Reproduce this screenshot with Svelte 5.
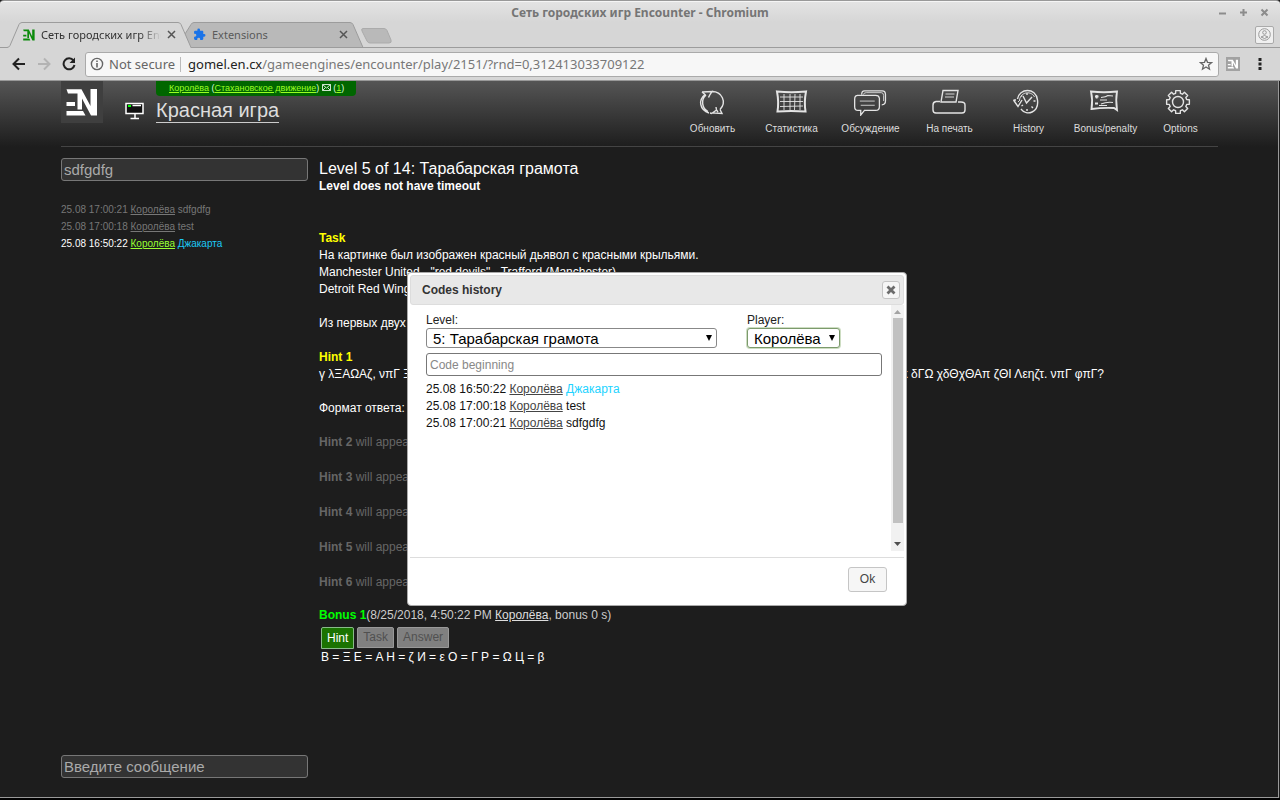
<script>
  const tools = [
    { id: 'refresh', label: 'Обновить' },
    { id: 'stats', label: 'Статистика' },
    { id: 'chat', label: 'Обсуждение' },
    { id: 'print', label: 'На печать' },
    { id: 'history', label: 'History' },
    { id: 'bonus', label: 'Bonus/penalty' },
    { id: 'options', label: 'Options' },
  ];
  const recent = [
    { time: '25.08 17:00:21', player: 'Королёва', code: 'sdfgdfg', ok: false },
    { time: '25.08 17:00:18', player: 'Королёва', code: 'test', ok: false },
    { time: '25.08 16:50:22', player: 'Королёва', code: 'Джакарта', ok: true },
  ];
  const codes = [...recent].reverse();
  const hints = [2, 3, 4, 5, 6];

  // Gear outline with eight teeth around the centre of a 28x28 box.
  let gear = '';
  for (let i = 0; i < 8; i++) {
    const a = (i * Math.PI) / 4;
    [[-0.27, 9], [-0.2, 11.6], [0.2, 11.6], [0.27, 9]].forEach(([d, r], j) => {
      const x = (14 + r * Math.sin(a + d)).toFixed(2);
      const y = (14 - r * Math.cos(a + d)).toFixed(2);
      gear += `${i === 0 && j === 0 ? 'M' : 'L'}${x} ${y}`;
    });
  }
  gear += 'Z';
</script>

{#snippet logo()}
  <path d="M5.5 8.3H20.5L29.5 25V8H36V34.5H30L21 17.5V28.5H16.5V12.5H7ZM5.5 21H14V25H5.5ZM5.5 30H22L24.5 34.5H5.5Z" />
{/snippet}

<div class="window">
  <div class="titlebar">
    <span class="title">Сеть городских игр Encounter - Chromium</span>
    <div class="controls">
      <button aria-label="Minimize"><svg width="9" height="9" viewBox="0 0 9 9"><path d="M1 5.5H8" /></svg></button>
      <button aria-label="Maximize"><svg width="9" height="9" viewBox="0 0 9 9"><path d="M1 4.5H8M4.5 1V8" /></svg></button>
      <button aria-label="Close window"><svg width="9" height="9" viewBox="0 0 9 9"><path d="M1.5 1.5L7.5 7.5M7.5 1.5L1.5 7.5" /></svg></button>
    </div>
  </div>

  <div class="tabs">
    <svg class="tabshapes" width="400" height="26" viewBox="0 0 400 26" aria-hidden="true">
      <path d="M185 12L191 2.5Q192 .5 194 .5H350Q352 .5 353 2.5L363 25.5H190Z" fill="#b9b9b9" stroke="#9c9c9c" />
      <path d="M0 25.5H7Q9 25.5 10 23.5L19 2.5Q20 .5 22 .5H178Q180 .5 181 2.5L191 25.5V27H0Z" fill="#d6d6d6" stroke="#9c9c9c" />
      <path d="M363 6.5H384Q386 6.5 387 8.5L391 18Q392 21 389 21H370Q368 21 367 19L362 9Q361 6.5 363 6.5Z" fill="#b9b9b9" stroke="#ababab" />
    </svg>
    <div class="tab first">
      <svg width="12" height="12" viewBox="5 7 32 29" fill="#0a8a0a" preserveAspectRatio="none">{@render logo()}</svg>
      <span class="tabname fade">Сеть городских игр Enc</span>
      <button aria-label="Close tab"><svg width="9" height="9" viewBox="0 0 9 9"><path d="M1 1L8 8M8 1L1 8" /></svg></button>
    </div>
    <div class="tab second">
      <svg width="13" height="13" viewBox="0 0 24 24" fill="#1a73e8"><path d="M20.5 11H19V7c0-1.100-.9-2-2-2h-4V3.500a2.500 2.500 0 0 0-5 0V5H4a2 2 0 0 0-2 2v3.800h1.500a2.700 2.700 0 0 1 0 5.400H2V20a2 2 0 0 0 2 2h3.800v-1.500a2.700 2.700 0 0 1 5.400 0V22H17a2 2 0 0 0 2-2v-4h1.500a2.500 2.500 0 0 0 0-5z" /></svg>
      <span class="tabname">Extensions</span>
      <button aria-label="Close tab"><svg width="9" height="9" viewBox="0 0 9 9"><path d="M1 1L8 8M8 1L1 8" /></svg></button>
    </div>
    <button class="profile" aria-label="Profile">
      <svg width="13" height="13" viewBox="0 0 13 13" fill="none" stroke="#999"><circle cx="6.5" cy="6.5" r="5.8" /><circle cx="6.5" cy="4.5" r="1.8" /><path d="M3 9Q6.5 6 10 9Q6.5 12 3 9Z" /></svg>
    </button>
  </div>

  <div class="toolbar">
    <button aria-label="Back"><svg width="14" height="14" viewBox="0 0 14 14" fill="none" stroke="#222" stroke-width="2"><path d="M13 7H2M7 1.5L1.5 7L7 12.5" /></svg></button>
    <button aria-label="Forward"><svg width="14" height="14" viewBox="0 0 14 14" fill="none" stroke="#b3b3b3" stroke-width="2"><path d="M1 7H12M7 1.5L12.5 7L7 12.5" /></svg></button>
    <button aria-label="Reload"><svg width="14" height="14" viewBox="0 0 14 14" fill="none" stroke="#222" stroke-width="2"><path d="M11.5 3.5A5.500 5.500 0 1 0 12.500 8" /><path d="M13 .5V6H7.500Z" fill="#222" stroke="none" /></svg></button>
    <div class="address">
      <svg width="14" height="14" viewBox="0 0 14 14" fill="none" stroke="#666"><circle cx="7" cy="7" r="5.6" stroke-width="1.4" /><path d="M7 6V10.500M7 3.500V5" stroke-width="1.6" /></svg>
      <span class="secure">Not secure</span>
      <span class="url"><b>gomel.en.cx</b>/gameengines/encounter/play/2151/?rnd=0,312413033709122</span>
      <svg width="14" height="14" viewBox="0 0 14 14" fill="none" stroke="#666" stroke-width="1.3"><path d="M7 1.500L8.500 5.300L12.600 5.600L9.500 8.200L10.500 12.200L7 10L3.500 12.200L4.500 8.200L1.400 5.600L5.500 5.300Z" /></svg>
    </div>
    <button class="ext" aria-label="Encounter"><svg width="14" height="14" viewBox="0 0 42 42"><rect width="42" height="42" fill="#a2a2a2" /><g fill="#fff">{@render logo()}</g></svg></button>
    <button aria-label="Menu"><svg width="4" height="12" viewBox="0 0 4 12" fill="#222"><path d="M.5 0H3.500V3H.5ZM.5 4.500H3.500V7.500H.5ZM.5 9H3.500V12H.5Z" /></svg></button>
  </div>

  <div class="page">
    <header>
      <a class="logo" href="#home" aria-label="Encounter"><svg width="42" height="42" viewBox="0 0 42 42" fill="#fff">{@render logo()}</svg></a>
      <svg class="monitor" width="20" height="18" viewBox="0 0 20 18" fill="none" stroke="#fff"><rect x="1" y="1.5" width="17" height="10" stroke-width="1.5" fill="#111" /><path d="M7.500 3.500H16M10 12V16M5.500 16.500H14" stroke-width="1.5" /><rect x="3" y="3" width="3" height="2" fill="#0f0" stroke="none" /></svg>
      <div class="game">
        <div class="user"><a href="#user">Королёва</a> (<a href="#team">Стахановское движение</a>) <svg width="9" height="7" viewBox="0 0 9 7" fill="none" stroke="#e4f4e4"><path d="M.5 .5H8.500V6.500H.5ZM.5 .5L4.500 4L8.500 .5M.5 6.500L3.500 3.500M8.500 6.500L5.500 3.500" stroke-width=".9" /></svg> (<a href="#mail">1</a>)</div>
        <a class="gamename" href="#game">Красная игра</a>
      </div>
      <nav>
        {#each tools as t}
          <a href="#{t.id}" class={t.id}>
            {#if t.id === 'refresh'}
              <svg width="30" height="28" viewBox="0 0 30 28"><path d="M4 4L14 3.500L12 6.500L10.500 9.500M4 4L7 6.500C0 12 1.500 22 11 25M8 7C2.500 12 4 20 10 23.500M12 25L14 25.500M14 3.500C24 3.500 29 14 22 21.500M22 21.500L24 25.500L14.500 25L18.500 22L18 19M20 24L18.500 22" /></svg>
            {:else if t.id === 'stats'}
              <svg width="34" height="28" viewBox="0 0 34 28"><path stroke-width="2" d="M2 3.500Q16 5 31 3.500Q29 14 30.500 23.500Q16 22.500 2.500 23.500Q4 14 2 3.500Z" /><path stroke-width=".9" d="M9 6V22M15 6V22M20 6L19.500 22M25 6V22M5 9H28M5 13.500H28M5 18.500L28 18" /></svg>
            {:else if t.id === 'chat'}
              <svg width="38" height="30" viewBox="0 0 38 30"><path d="M9 7Q9 3 12 3L31 3Q34.500 3 34.500 7V14Q34.500 18 30.500 18M4 8H24Q27.500 8 28 11V20Q28 24 24 24H12L8 29L8 24H5Q1.500 24 1.500 20V12Q1.500 8 5 8" /><path stroke-width=".9" d="M11 7Q11 5 14 5H30Q32.500 5 32.500 8V14M7 14H23M8 18.500H23" /></svg>
            {:else if t.id === 'print'}
              <svg width="38" height="28" viewBox="0 0 38 28"><path d="M10 14L12 2.500H27L25 14ZM9 13.500H5Q2 14 2 17V22Q2 25 5 25H31Q34 25 34 22V17Q34 14 30 14H27" /><path stroke-width=".9" d="M14.500 6H23.500M14 9H23" /></svg>
            {:else if t.id === 'history'}
              <svg width="34" height="28" viewBox="0 0 34 28"><path d="M5.500 11C7 0 24 -1 25.500 12C27 24 15 29 9 21M1.500 12L6 18.500L10 12M1.500 12H4" /><path stroke-width=".9" d="M7.500 12C9 3 20 3 22.500 9M9 9L10 7M6 14L8 12" /><path d="M11 8L14.500 15L20 9M15 5V7M21.500 13H23.500M15 21V23M9.500 18L11 17M19.500 18.500L21 20" /></svg>
            {:else if t.id === 'bonus'}
              <svg width="34" height="28" viewBox="0 0 34 28"><path stroke-width="1.8" d="M2 3.500Q15 5 28 3.500Q26.500 12 28 22L25 20Q13 19.500 2.500 21Q4 12 2 3.500Z" /><path d="M6 8.500H9.500M7.700 7V10.500M6 15.500H9" stroke-width="1.8" /><path stroke-width="1.1" d="M12 9.500Q17 9 19 7.500L24 8M11 12H18M12 16Q18 13.500 24 14.500M10 17.500H18" /></svg>
            {:else}
              <svg width="34" height="28" viewBox="0 0 34 28"><path d={gear} stroke-linejoin="round" /><circle cx="14" cy="14" r="5.5" /></svg>
            {/if}
            <span>{t.label}</span>
          </a>
        {/each}
      </nav>
    </header>

    <div class="columns">
      <aside>
        <input class="dark" type="text" aria-label="Code" value="sdfgdfg" />
        <ul class="recent">
          {#each recent as r}
            <li class:ok={r.ok}>{r.time} <a href="#player">{r.player}</a> <span>{r.code}</span></li>
          {/each}
        </ul>
        <input class="dark message" type="text" aria-label="Message" placeholder="Введите сообщение" />
      </aside>
      <main>
        <h1>Level 5 of 14: Тарабарская грамота</h1>
        <p class="timeout">Level does not have timeout</p>
        <h2>Task</h2>
        <p>На картинке был изображен красный дьявол с красными крыльями.<br />Manchester United - "red devils" - Trafford (Manchester)<br />Detroit Red Wings</p>
        <p>Из первых двух б</p>
        <h2>Hint 1</h2>
        <p class="cipher"><span>γ λΞΑΩΑζ, νπΓ Ξ</span><span>κκ δΓΩ χδΘχΘΑπ ζΘΙ Λεηζτ. νπΓ φπΓ?</span></p>
        <p>Формат ответа: с</p>
        {#each hints as n}
          <p class="pending"><b>Hint {n}</b> will appear</p>
        {/each}
        <div class="bonusline"><b>Bonus 1</b>(8/25/2018, 4:50:22 PM <a href="#player">Королёва</a>, bonus 0 s)</div>
        <div class="switch">
          <button class="on">Hint</button>
          <button>Task</button>
          <button>Answer</button>
        </div>
        <p class="key">В = Ξ Е = Α Н = ζ И = ε О = Γ Р = Ω Ц = β</p>
      </main>
    </div>
  </div>

  <div class="dialog" role="dialog" aria-labelledby="dialog-title">
    <div class="dhead">
      <span id="dialog-title">Codes history</span>
      <button aria-label="Close"><svg width="10" height="10" viewBox="0 0 10 10"><path d="M1.500 1.500L8.500 8.500M8.500 1.500L1.500 8.500" stroke="#6c6c6c" stroke-width="2.8" /></svg></button>
    </div>
    <div class="dbody">
      <div class="form">
        <div class="selects">
          <div class="field level">
            <label for="level">Level:</label>
            <select id="level"><option>5: Тарабарская грамота</option></select>
          </div>
          <div class="field">
            <label for="player">Player:</label>
            <select id="player" class="focus"><option>Королёва</option></select>
          </div>
        </div>
        <input class="filter" type="text" aria-label="Code beginning" placeholder="Code beginning" />
        <ul class="codes">
          {#each codes as c}
            <li class:ok={c.ok}>{c.time} <a href="#player">{c.player}</a> <span>{c.code}</span></li>
          {/each}
        </ul>
      </div>
      <div class="scroll" aria-hidden="true">
        <svg width="13" height="13" viewBox="0 0 13 13"><path d="M3 9L6.500 5L10 9Z" fill="#a3a3a3" /></svg>
        <div class="thumb"></div>
        <svg width="13" height="13" viewBox="0 0 13 13"><path d="M3 4L6.500 8L10 4Z" fill="#505050" /></svg>
      </div>
    </div>
    <div class="dfoot"><button>Ok</button></div>
  </div>
</div>

<style>
  :global(body) { margin: 0; background: #000; }
  * { box-sizing: border-box; }
  .window {
    position: relative; display: flex; flex-direction: column;
    min-height: 100vh; border-bottom: 2px solid #000;
    font: 12px/17px "Liberation Sans", Arial, sans-serif; color: #fff; background: #1d1d1d;
  }
  button { font: inherit; border: 0; padding: 0; background: none; display: flex; align-items: center; justify-content: center; }
  svg { display: block; flex: none; }
  p, h1, h2, ul { margin: 0; padding: 0; list-style: none; }
  b { font-weight: bold; }

  .titlebar {
    display: flex; align-items: center; justify-content: center; height: 22px; position: relative;
    border-top: 1px solid #999; border-radius: 4px 4px 0 0; box-shadow: inset 0 1px #f5f5f5;
    background: linear-gradient(#e4e4e4, #d6d6d6);
    font: bold 12px/22px "Noto Sans", sans-serif; color: #757575;
  }
  .title { padding-top: 2px; }
  .controls { position: absolute; right: 11px; top: 7px; display: flex; gap: 12px; }
  .controls svg { fill: none; stroke: #8c8c8c; stroke-width: 2; }

  .tabs { position: relative; display: flex; align-items: center; height: 26px; background: #d6d6d6; border-bottom: 1px solid #9c9c9c; font: 11px/24px "Noto Sans", sans-serif; color: #333; }
  .tabshapes { position: absolute; left: 0; top: 0; }
  .tab { position: relative; display: flex; align-items: center; gap: 6px; padding-left: 23px; width: 177px; }
  .tab.second { padding-left: 16px; width: 200px; color: #5a5a5a; }
  .tab svg { stroke-width: 0; }
  .tab button svg { stroke: #555; stroke-width: 1.5px; fill: none; }
  .tabname { flex: none; width: 121px; white-space: nowrap; }
  .tabname.fade { width: 120px; mask-image: linear-gradient(90deg, #000 82%, transparent); }
  .profile { margin-left: auto; margin-right: 6px; width: 19px; height: 18px; border: 1px solid #aaa; border-radius: 2px; background: #f0f0f0; }

  .toolbar { display: flex; align-items: center; height: 33px; padding: 0 18px 0 12px; gap: 11px; background: #d6d6d6; border-bottom: 1px solid #999; }
  .address { flex: 1; display: flex; align-items: center; height: 25px; margin-left: -2px; padding: 0 5px 0 4px; gap: 5px; background: #f7f7f7; border: 1px solid #aaa; border-radius: 3px; font: 13px/23px "Noto Sans", sans-serif; color: #777; }
  .secure { color: #666; }
  .url { flex: 1; border-left: 1px solid #bbb; padding-left: 7px; line-height: 15px; }
  .url b { font-weight: normal; color: #222; }
  .ext { margin-left: -4px; margin-right: 7px; }

  .page {
    flex: 1; display: flex; flex-direction: column; padding: 0 60px 19px 61px; border-bottom: 1px solid #999; border-right: 1px solid #999; margin-right: 1px;
    background: linear-gradient(#555, #1d1d1d 66px);
  }
  header { display: flex; height: 66px; border-bottom: 1px solid #444; }
  .logo { width: 42px; height: 42px; background: #3f3f3f; }
  .monitor { margin: 21px 11px 0 22px; }
  .user { display: inline-block; height: 15px; padding: 0 12px 0 13px; background: #060; border-radius: 0 0 4px 4px; font-size: 9px; line-height: 14px; color: #dfd; white-space: nowrap; }
  .user svg { display: inline-block; }
  .user a { color: #9f2; }
  .game { display: flex; flex-direction: column; align-items: flex-start; }
  .gamename { margin-top: 4px; padding-bottom: 1px; font-size: 20px; line-height: 21px; color: #ddd; text-decoration: none; border-bottom: 1px solid #ccc; }
  nav { margin-left: auto; display: flex; }
  nav a { width: 79px; padding-top: 7px; display: flex; flex-direction: column; align-items: center; font-size: 10px; line-height: 14px; color: #ddd; text-decoration: none; }
  nav a.bonus, nav a.options { width: 75px; }
  nav svg { height: 28px; fill: none; stroke: #e4e4e4; stroke-width: 1.4px; }
  nav span { margin-top: 6px; }

  .columns { flex: 1; display: flex; gap: 11px; padding-top: 11px; }
  aside { width: 247px; display: flex; flex-direction: column; }
  .dark { width: 100%; height: 23px; padding: 0 2px; font: 15px "Liberation Sans", sans-serif; color: #aaa; background: #333; border: 1px solid #777; border-radius: 3px; }
  .dark::placeholder { color: #aaa; opacity: 1; }
  .message { margin-top: auto; }
  .recent { margin-top: 20px; font-size: 10px; color: #777; }
  .recent a { color: #777; }
  .recent .ok { color: #fff; }
  .recent .ok a { color: #9f3; }
  .recent .ok span { color: #1cc8f5; }

  main { flex: 1; }
  h1 { margin-top: 1px; font-size: 16px; line-height: 19px; font-weight: normal; }
  .timeout { font-weight: bold; }
  h2 { font-size: 12px; line-height: 17px; color: #ff0; }
  main p + p { margin-top: 17px; }
  main p + h2 { margin-top: 17px; }
  main .timeout + h2 { margin-top: 35px; }
  .cipher { display: flex; justify-content: space-between; max-width: 785px; }
  .pending { color: #666; }
  main .pending + .pending { margin-top: 18px; }
  .bonusline { margin-top: 16px; color: #ccc; }
  .bonusline b { color: #0f0; }
  .bonusline a { color: #ddd; }
  .switch { display: flex; gap: 3px; margin: 3px 0 0 2px; }
  .switch button { height: 21px; padding: 0 5px; background: #808080; color: #505050; border: 1px solid #999; border-radius: 2px 2px 0 0; }
  .switch .on { height: 22px; background: #1a7300; color: #fff; border-color: #8b8; }
  .key { margin-left: 2px; }

  .dialog { position: absolute; top: 272px; left: calc(50% - 233px); width: 500px; padding: 2px; background: #fff; border: 1px solid #aaa; border-radius: 4px; color: #222; }
  .dhead { display: flex; align-items: center; justify-content: space-between; height: 30px; padding: 0 3px 0 11px; background: #e8e8e8; border: 1px solid #ddd; border-radius: 3px; font-weight: bold; color: #333; }
  .dhead button { width: 18px; height: 18px; background: #f6f6f6; border: 1px solid #c5c5c5; border-radius: 3px; }
  .dbody { display: flex; height: 246px; }
  .form { flex: 1; padding: 7px 9px 0 16px; }
  .selects { display: flex; gap: 30px; }
  .field { display: flex; flex-direction: column; line-height: 16px; }
  .level { width: 291px; }
  select {
    appearance: none; height: 20px; padding: 0 18px 0 6px; font: 15px "Liberation Sans", sans-serif; color: #000; border: 1px solid #888; border-radius: 3px;
    background: #fff url("data:image/svg+xml,%3Csvg xmlns='http://www.w3.org/2000/svg' width='6' height='6'%3E%3Cpath d='M0 0H6L3 6Z'/%3E%3C/svg%3E") no-repeat right 4px center;
  }
  .focus { border-color: #7c9a6c; box-shadow: 0 0 0 1px #cdddc2; }
  .filter { display: block; width: 100%; height: 23px; margin-top: 5px; padding: 0 3px; font: 12px "Liberation Sans", sans-serif; border: 1px solid #777; border-radius: 3px; }
  .filter::placeholder { color: #888; opacity: 1; }
  .codes { margin-top: 5px; color: #111; }
  .codes a { color: #444; }
  .codes .ok span { color: #22d3ff; }
  .scroll { width: 13px; display: flex; flex-direction: column; background: #f1f1f1; }
  .thumb { flex: 1; margin: 0 1px 15px 2px; background: #c1c1c1; }
  .dfoot { display: flex; justify-content: flex-end; margin-top: 6px; padding: 9px 17px 11px; border-top: 1px solid #ddd; }
  .dfoot button { width: 39px; height: 25px; background: #f6f6f6; border: 1px solid #c5c5c5; border-radius: 3px; color: #454545; }
</style>
